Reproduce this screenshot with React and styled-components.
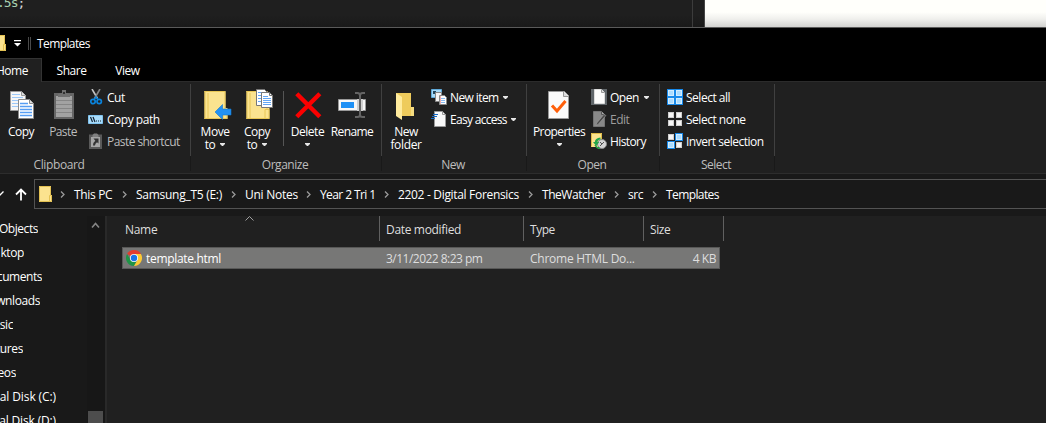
import React from "react";
import styled, { createGlobalStyle } from "styled-components";

const Global = createGlobalStyle`
  * { box-sizing: border-box; }
  body { margin: 0; background: #202020; overflow: hidden; }
`;

const Screen = styled.div`
  width: 1046px;
  height: 423px;
  overflow: hidden;
  display: flex;
  flex-direction: column;
  background: #202020;
  color: #fff;
  font-family: "Open Sans", "Noto Sans", sans-serif;
  font-size: 12px;
  line-height: 15px;
  white-space: nowrap;
`;

const T = styled.span`
  letter-spacing: ${(p) => p.$ls ?? -0.48}px;
  color: ${(p) => p.$c || "inherit"};
`;

/* Windows behind the explorer */
const Backdrop = styled.div`
  height: 27px;
  flex: none;
  display: flex;
`;
const Editor = styled.div`
  width: 693px;
  border-right: 1px solid #3c3c3c;
  background: linear-gradient(#1f1f1f 55%, #191919);
`;
const Code = styled.div`
  font: 13px/14px "DejaVu Sans Mono", monospace;
  letter-spacing: -1px;
  margin: -4px 0 0 -3px;
  color: #a8cfb0;
`;
const Punct = styled.span`
  color: #d4d4d4;
`;
const Gutter = styled.div`
  width: 12px;
  border-right: 1px solid #454545;
  background: linear-gradient(#1f1f1f 55%, #191919);
`;
const Page = styled.div`
  flex: 1;
  background: linear-gradient(#fffffb 45%, #f0f0ed 70%, #d2d2d0);
`;

const TitleBar = styled.div`
  height: 31px;
  flex: none;
  border-top: 1px solid #5a5a5a;
  background: #000;
  display: flex;
  align-items: center;
`;
const TitleFolder = styled.div`
  width: 6px;
  height: 16px;
  overflow: hidden;
  display: flex;
  justify-content: flex-end;
  svg { flex: none; }
`;
const TitleCaret = styled.svg`
  margin: 1px 0 0 8px;
`;
const Grip = styled.div`
  width: 3px;
  height: 13px;
  margin: 0 6px 0 7px;
  border: solid #4a4a4a;
  border-width: 0 1px;
`;

const Tabs = styled.div`
  height: 23px;
  flex: none;
  background: #000;
  display: flex;
`;
const Tab = styled.div`
  width: ${(p) => p.$w}px;
  padding: ${(p) => (p.$on ? "4px 13px 0 0" : "5px 0 0")};
  display: flex;
  justify-content: ${(p) => (p.$on ? "flex-end" : "center")};
  ${(p) => p.$on && "background:#202020;border:solid #333;border-width:1px 1px 0 0;height:24px;position:relative;"}
`;

const Ribbon = styled.div`
  height: 93px;
  flex: none;
  border-top: 1px solid #2b2b2b;
  border-bottom: 1px solid #2d2d2d;
  display: flex;
  background: #202020;
`;
const Group = styled.div`
  width: ${(p) => p.$w}px;
  flex: none;
  display: flex;
  flex-direction: column;
  padding-bottom: 2px;
`;
const GroupBody = styled.div`
  height: 72px;
  margin-top: 2px;
  padding-left: ${(p) => p.$pl || 0}px;
  border-right: 1px solid #404040;
  display: flex;
  flex: none;
`;
const Caption = styled.div`
  height: 15px;
  padding: 1px ${(p) => p.$pr || 0}px 0 ${(p) => p.$pl || 0}px;
  border-right: 1px solid #191919;
  text-align: center;
  color: #bdbdbd;
`;
const Big = styled.div`
  width: ${(p) => p.$w || 42}px;
  padding-top: 6px;
  display: flex;
  flex-direction: column;
  align-items: center;
  line-height: 14px;
  svg.pic { margin-bottom: 3px; overflow: visible; }
`;
const Line = styled.div`
  height: 13px;
  display: flex;
  align-items: flex-start;
  gap: 5px;
  svg.caret { margin-top: 5px; }
`;
const Divider = styled.div`
  width: 1px;
  height: 55px;
  margin: 7px 0 0 5px;
  background: #555;
`;
const Small = styled.div`
  padding: 2px 0 0 ${(p) => p.$pl || 0}px;
`;
const SmallRow = styled.div`
  height: 22px;
  display: flex;
  align-items: center;
  gap: 3px;
  svg.caret { margin-left: ${(p) => p.$gap || 0}px; }
`;

const NavBar = styled.div`
  height: 42px;
  flex: none;
  padding-top: 5px;
  display: flex;
  background: #191919;
`;
const Arrows = styled.div`
  width: 34px;
  height: 30px;
`;
const Address = styled.div`
  flex: 1;
  height: 30px;
  border: solid #535353;
  border-width: 1px 0 1px 1px;
  padding-left: 4px;
  display: flex;
  align-items: center;
`;
const Crumbs = styled.div`
  display: flex;
  margin-left: 8px;
`;
const Crumb = styled.div`
  width: ${(p) => p.$w}px;
  flex: none;
  display: flex;
  align-items: center;
  gap: 9px;
`;

const Lower = styled.div`
  flex: 1;
  display: flex;
  min-height: 0;
`;
const Tree = styled.div`
  width: 87px;
  background: #191919;
`;
const Node = styled.div`
  width: ${(p) => p.$w}px;
  height: 24px;
  overflow: hidden;
  display: flex;
  align-items: center;
  justify-content: flex-end;
`;
const Scroll = styled.div`
  width: 18px;
  padding: 6px 2px 0 1px;
  background: #171717;
  display: flex;
  flex-direction: column;
  justify-content: space-between;
  align-items: center;
`;
const Thumb = styled.div`
  width: 15px;
  height: 12px;
  background: #4d4d4d;
`;
const Files = styled.div`
  flex: 1;
  border-left: 2px solid #292929;
`;
const Header = styled.div`
  display: flex;
  height: 25px;
  padding-left: 12px;
`;
const Col = styled.div`
  width: ${(p) => p.$w}px;
  padding: 6px 0 0 6px;
  border-right: 1px solid #606060;
  color: #dedede;
  position: relative;
`;
const SortMark = styled.svg`
  position: absolute;
  top: 0;
  left: 126px;
`;
const FileRow = styled.div`
  width: 598px;
  height: 22px;
  margin: 6px 0 0 15px;
  border: 1px solid #585857;
  background: #777776;
  display: flex;
  align-items: center;
`;
const Cell = styled.div`
  width: ${(p) => p.$w}px;
  flex: none;
  display: flex;
  align-items: center;
  gap: 4px;
  padding-left: ${(p) => p.$pl || 0}px;
  justify-content: ${(p) => (p.$end ? "flex-end" : "flex-start")};
  color: ${(p) => p.$c || "#dedede"};
`;

const Caret = () => (
  <svg className="caret" width="5" height="3" viewBox="0 0 5 3"><path d="M0 0h5v1L3 3H2L0 1z" fill="#e6e6e6" /></svg>
);
const Pic = ({ w = 32, h = 32, children }) => (
  <svg className={h === 32 ? "pic" : undefined} width={w} height={h} viewBox={`0 0 ${w} ${h}`}>{children}</svg>
);

const Folder = () => (
  <svg width="13" height="16" viewBox="0 0 13 16">
    <path d="M0 0h12v9h1v7H0z" fill="#fbe38f" />
    <path d="M.5.5h11v9h1v6H.500zM10.500 15.500V9.500h1" fill="none" stroke="#e3c152" />
  </svg>
);
const CopyPic = () => (
  <Pic>
    <g transform="translate(1 0)">
      <path d="M4.500 1.500h11l4 4v15h-15z" fill="#f6f6f6" stroke="#999" />
      <path d="M15.500 1.500v4h4" fill="#ddd" stroke="#999" />
      <path d="M6 7.500h11M6 10.500h11M6 13.500h11M6 16.500h11M6 4.500h8" stroke="#9cc8f8" />
      <path d="M12.500 9.500h11l4 4v15h-15z" fill="#fff" stroke="#8a8a8a" />
      <path d="M23.500 9.500v4h4" fill="#ddd" stroke="#8a8a8a" />
      <path d="M14 13.500h8M14 16.500h12M14 19.500h12M14 22.500h12M14 25.500h12" stroke="#559df3" strokeWidth="1.300" />
    </g>
  </Pic>
);
const PastePic = () => (
  <Pic>
    <g transform="translate(1 0)">
      <path d="M6 3h20v26H6z" fill="#666" />
      <path d="M8 6h16v21H8z" fill="#a2a2a2" />
      <path d="M8 10.500h16M8 14.500h16M8 18.500h16M8 22.500h16" stroke="#858585" />
      <path d="M10 7V4l4-1V0h4v3l4 1v3z" fill="#707070" />
      <path d="M15 2h2v2h-2z" fill="#333" />
    </g>
  </Pic>
);
const BigFolderShape = () => (
  <g transform="translate(1.500 0)">
    <path d="M4 1h21v17h2v11H4z" fill="#fbe38f" />
    <path d="M4.500 1v28M7.500 3v26M4 1.500h20.500v17.500M4 28.500h22.500v-9h-4v9" fill="none" stroke="#e8c654" />
  </g>
);
const MovePic = () => (
  <Pic>
    <BigFolderShape />
    <path d="M16 22L23.500 14.500V19h8.500v6h-8.500v4.500z" fill="#2291f2" stroke="#1278d0" strokeWidth=".6" />
  </Pic>
);
const CopyToPic = () => (
  <Pic>
    <BigFolderShape />
    <path d="M15.500-.5h8l3 3v13h-11z" fill="#fff" stroke="#777" />
    <path d="M17 2.500h6M17 5.500h7M17 8.500h7M17 11.500h7" stroke="#63a6f5" />
    <path d="M20.500 2.500h8l3 3v12h-11z" fill="#fff" stroke="#777" />
    <path d="M28.500 2.500v3h3" fill="none" stroke="#777" />
    <path d="M22 6.500h5M22 8.500h8M22 10.500h8M22 12.500h8M22 14.500h8" stroke="#63a6f5" />
  </Pic>
);
const DeletePic = () => (
  <Pic><path d="M4.800 3.800l23 23M27.800 3.800l-23 23" stroke="#fb0000" strokeWidth="4.400" /></Pic>
);
const RenamePic = () => (
  <Pic>
    <path d="M2.500 9.500h27v11h-27z" fill="#f7f7f7" stroke="#999" />
    <path d="M5 12h13v6H5z" fill="#1e90f5" />
    <path d="M21 9h6v12h-6z" fill="#d0d0d0" />
    <path d="M19 3h2.500q2.500 0 2.500 2.500v19q0 2.500-2.500 2.500H19M29 3h-2.500Q24 3 24 5.500v19q0 2.500 2.500 2.500H29" fill="none" stroke="#646464" strokeWidth="2" />
  </Pic>
);
const NewFolderPic = () => (
  <Pic>
    <path d="M6 3h15v14l3 1v8H10z" fill="#eecb5c" />
    <path d="M21 17h3v9h-3z" fill="#f5dc80" />
    <path d="M6 3l6 4v23l-6-4z" fill="#ffeb9d" />
  </Pic>
);
const PropsPic = () => (
  <Pic>
    <path d="M5.500 1.500h16l4 4v23h-20z" fill="#fbfbfb" stroke="#9a9a9a" />
    <path d="M20.500 1.500v5h5" fill="#ddd" stroke="#999" />
    <path d="M9 15.500l5 5.500L22.500 11" fill="none" stroke="#ff5f0a" strokeWidth="3" />
  </Pic>
);
const CutPic = () => (
  <Pic w={16} h={16}>
    <path d="M4 0l5.500 9.500" stroke="#c4c4c4" strokeWidth="1.600" />
    <path d="M12 0L6.500 9.500" stroke="#858585" strokeWidth="1.600" />
    <circle cx="5" cy="12.500" r="2.200" fill="none" stroke="#0a83dc" strokeWidth="1.700" />
    <circle cx="11.200" cy="12.500" r="2.200" fill="none" stroke="#0a83dc" strokeWidth="1.700" />
    <path d="M6 10.500l2-2.500 2 2.500" stroke="#0a83dc" strokeWidth="1.500" fill="none" />
  </Pic>
);
const PathPic = () => (
  <Pic w={16} h={16}>
    <path d="M.5 4.500h14v8H.500z" fill="#a9dcfb" stroke="#80c3ee" />
    <path d="M2.500 6l2 5M5 6l2 5" stroke="#123" strokeWidth="1.200" />
    <path d="M8 9.500h1v1H8zM10 9.500h1v1h-1zM12 9.500h1v1h-1z" fill="#123" />
  </Pic>
);
const ShortcutPic = () => (
  <Pic w={16} h={16}>
    <path d="M1 1.500h13V16H1z" fill="#5a5a5a" />
    <path d="M3 4h9v10H3z" fill="#a6a6a6" />
    <path d="M4.500 2L6 .5h3L10.500 2v2h-6z" fill="#808080" />
    <path d="M5.500 5.500h5v5L9 9.200Q7 10.500 7 12.500H5q-.3-2.800 2.300-4.800z" fill="#333" />
  </Pic>
);
const NewItemPic = () => (
  <Pic w={16} h={16}>
    <path d="M.5.500h10v8H.500z" fill="#a5dafa" stroke="#5fa9d8" />
    <path d="M2 2h3v3H2z" fill="#23485f" />
    <path d="M4.500 3.500h6v9h-6z" fill="#f5f5f5" stroke="#888" />
    <path d="M8.500 6.500h5l2 2v7h-7z" fill="#fff" stroke="#888" />
    <path d="M10 9.500h4M10 11.500h4M10 13.500h4" stroke="#88baf2" />
    <path d="M9.500 7v8" stroke="#e06060" strokeWidth=".5" />
  </Pic>
);
const EasyPic = () => (
  <Pic w={16} h={16}>
    <path d="M3.500.500h8l3 3v12h-11z" fill="#f8f8f8" stroke="#999" />
    <path d="M11.500.500v3h3" fill="none" stroke="#999" />
    <path d="M2 3.500h5M1 5.500h5M0 7.500h4" stroke="#1769c4" strokeWidth="1.200" />
  </Pic>
);
const OpenPic = () => (
  <Pic w={16} h={16}>
    <path d="M0 0h16v16H0z" fill="#60666a" />
    <path d="M3.500.500h7l3 3v11h-10z" fill="#fcfcfc" stroke="#ddd" />
    <path d="M10.500.500v3h3" fill="#ddd" stroke="#999" />
  </Pic>
);
const EditPic = () => (
  <Pic w={16} h={16}>
    <path d="M2.500.500h8l3 3v12h-11z" fill="#888" stroke="#747474" />
    <path d="M10.500.500v3h3" fill="#aaa" stroke="#555" />
    <path d="M15 4.500l-8 9-2 1 .8-2.500 7-8.500z" fill="#4a4a4a" stroke="#aaa" strokeWidth=".5" />
  </Pic>
);
const HistoryPic = () => (
  <Pic w={16} h={16}>
    <path d="M0 0h11v14H0z" fill="#fbe38f" />
    <path d="M.5 13.500V.5H10.500V8" fill="none" stroke="#dfbb46" />
    <circle cx="11" cy="11" r="4.500" fill="#d5d5d5" stroke="#888" />
    <path d="M9 9l2 2 2-2M11 11l-2 2" fill="none" stroke="#555" />
    <path d="M9.500 4.500Q4 5 3.800 9H2l3.200 4L8.300 9H6.500Q6.500 7 9.500 6.500z" fill="#25a64a" />
    <path d="M4 12q2 3.500 5 3.500" fill="none" stroke="#25a64a" strokeWidth="1.500" />
  </Pic>
);
const TILES = [[0, 0], [8, 0], [0, 8], [8, 8]];
const SelectPic = ({ on }) => (
  <Pic w={16} h={16}>
    {TILES.map(([x, y], i) => (
      <g key={i}>
        {on[i] ? <rect x={x} y={y} width="8" height="8" fill="#1789ea" /> : null}
        <rect x={x + 1.500} y={y + 1.500} width="5" height="5" fill={on[i] ? "#abdcff" : "#f6f6f6"} stroke={on[i] ? "#d2edff" : "#cfcfcf"} />
      </g>
    ))}
  </Pic>
);
const ChromePic = () => (
  <svg width="16" height="16" viewBox="0 0 16 16">
    <path d="M8 8L1.070 4A8 8 0 0 1 14.930 4z" fill="#e33b2e" />
    <path d="M1.070 4L4.540 10 8 8l3.460 2L8 16A8 8 0 0 1 1.070 4z" fill="#1e9446" />
    <path d="M8 4h6.930A8 8 0 0 1 8 16l3.460-6z" fill="#fcc934" />
    <circle cx="8" cy="8" r="4" fill="#fff" />
    <circle cx="8" cy="8" r="3.200" fill="#1a73e8" />
  </svg>
);
const Chevron = () => (
  <svg width="5" height="7" viewBox="0 0 5 7"><path d="M1 .5l3 3-3 3" fill="none" stroke="#9a9a9a" strokeWidth="1.300" /></svg>
);

const CRUMBS = [
  ["This PC", 62, -0.33], ["Samsung_T5 (E:)", 109, -0.27], ["Uni Notes", 75, -0.25], ["Year 2 Tri 1", 78, -0.6],
  ["2202 - Digital Forensics", 144, -0.32], ["TheWatcher", 86, -0.45], ["src", 38, -0.4], ["Templates", 80, -0.6],
];
const NODES = [
  ["Objects", 38, -0.45], ["ktop", 24, -0.4], ["cuments", 42, -0.45], ["wnloads", 40, -0.4], ["sic", 13, -0.4],
  ["ctures", 23, -0.4], ["eos", 16, -0.4], ["al Disk (C:)", 56, -0.1], ["al Disk (D:)", 56, -0.15],
];

export default function App() {
  return (
    <Screen>
      <Global />
      <Backdrop>
        <Editor><Code>.5s<Punct>;</Punct></Code></Editor>
        <Gutter />
        <Page />
      </Backdrop>
      <TitleBar>
        <TitleFolder><Folder /></TitleFolder>
        <TitleCaret width="7" height="7" viewBox="0 0 7 7"><path d="M0 0h7v1.200H0zM0 3h7L3.500 6.500z" fill="#fff" /></TitleCaret>
        <Grip />
        <T $ls={-0.6}>Templates</T>
      </TitleBar>
      <Tabs>
        <Tab $on $w={42}><T>Home</T></Tab>
        <Tab $w={59}><T>Share</T></Tab>
        <Tab $w={53}><T>View</T></Tab>
      </Tabs>
      <Ribbon>
        <Group $w={191}>
          <GroupBody>
            <Big><CopyPic /><Line><T>Copy</T></Line></Big>
            <Big><PastePic /><Line><T $c="#bdbdbd" $ls={-0.6}>Paste</T></Line></Big>
            <Small $pl={4}>
              <SmallRow><CutPic /><T>Cut</T></SmallRow>
              <SmallRow><PathPic /><T>Copy path</T></SmallRow>
              <SmallRow><ShortcutPic /><T $c="#bdbdbd" $ls={-0.56}>Paste shortcut</T></SmallRow>
            </Small>
          </GroupBody>
          <Caption $pr={72}><T $ls={-0.4}>Clipboard</T></Caption>
        </Group>
        <Group $w={191}>
          <GroupBody $pl={3}>
            <Big><MovePic /><Line><T>Move</T></Line><Line><T>to</T><Caret /></Line></Big>
            <Big><CopyToPic /><Line><T>Copy</T></Line><Line><T>to</T><Caret /></Line></Big>
            <Divider />
            <Big $w={47}><DeletePic /><Line><T>Delete</T></Line><Line><Caret /></Line></Big>
            <Big><RenamePic /><Line><T $ls={-0.6}>Rename</T></Line></Big>
          </GroupBody>
          <Caption $pr={2}><T>Organize</T></Caption>
        </Group>
        <Group $w={145}>
          <GroupBody $pl={3}>
            <Big><NewFolderPic /><Line><T $ls={-0.6}>New</T></Line><Line><T $ls={-0.35}>folder</T></Line></Big>
            <Small $pl={4}>
              <SmallRow $gap={1}><NewItemPic /><T $ls={-0.6}>New item</T><Caret /></SmallRow>
              <SmallRow $gap={1}><EasyPic /><T $ls={-0.7}>Easy access</T><Caret /></SmallRow>
            </Small>
          </GroupBody>
          <Caption $pr={2}><T>New</T></Caption>
        </Group>
        <Group $w={133}>
          <GroupBody $pl={3}>
            <Big $w={58}><PropsPic /><Line><T $ls={-0.6}>Properties</T></Line><Line><Caret /></Line></Big>
            <Small $pl={3}>
              <SmallRow $gap={2}><OpenPic /><T>Open</T><Caret /></SmallRow>
              <SmallRow><EditPic /><T $c="#9d9d9d">Edit</T></SmallRow>
              <SmallRow><HistoryPic /><T $ls={-0.6}>History</T></SmallRow>
            </Small>
          </GroupBody>
          <Caption $pr={2}><T>Open</T></Caption>
        </Group>
        <Group $w={115}>
          <GroupBody $pl={7}>
            <Small>
              <SmallRow><SelectPic on={[1, 1, 1, 1]} /><T>Select all</T></SmallRow>
              <SmallRow><SelectPic on={[0, 0, 0, 0]} /><T>Select none</T></SmallRow>
              <SmallRow><SelectPic on={[0, 1, 1, 0]} /><T $ls={-0.5}>Invert selection</T></SmallRow>
            </Small>
          </GroupBody>
          <Caption $pr={2}><T>Select</T></Caption>
        </Group>
      </Ribbon>
      <NavBar>
        <Arrows>
          <svg width="34" height="30" viewBox="0 0 34 30" fill="none" stroke="#fff">
            <path d="M-3 13l3 3 3.500-3.500" strokeWidth="1.300" />
            <path d="M21 21.500V11M16 15.500l5-5 5 5" strokeWidth="1.800" />
          </svg>
        </Arrows>
        <Address>
          <Folder />
          <Crumbs>
            {CRUMBS.map(([name, w, ls]) => (
              <Crumb key={name} $w={w}><Chevron /><T $ls={ls}>{name}</T></Crumb>
            ))}
          </Crumbs>
        </Address>
      </NavBar>
      <Lower>
        <Tree>
          {NODES.map(([name, w, ls]) => <Node key={name} $w={w}><T $ls={ls}>{name}</T></Node>)}
        </Tree>
        <Scroll>
          <svg width="9" height="7" viewBox="0 0 9 7"><path d="M1 5.500l3.500-4 3.500 4" fill="none" stroke="#858585" strokeWidth="1.600" /></svg>
          <Thumb />
        </Scroll>
        <Files>
          <Header>
            <Col $w={261}>
              <T $ls={-0.3}>Name</T>
              <SortMark width="9" height="5" viewBox="0 0 9 5"><path d="M.5 4.500l4-4 4 4" fill="none" stroke="#a0a0a0" /></SortMark>
            </Col>
            <Col $w={144}><T $ls={-0.33}>Date modified</T></Col>
            <Col $w={120}><T>Type</T></Col>
            <Col $w={80}><T $ls={-0.4}>Size</T></Col>
          </Header>
          <FileRow>
            <Cell $w={263} $pl={3} $c="#fff"><ChromePic /><T $ls={-0.32}>template.html</T></Cell>
            <Cell $w={144}><T $ls={-0.52}>3/11/2022 8:23 pm</T></Cell>
            <Cell $w={120}><T $ls={-0.25}>Chrome HTML Do...</T></Cell>
            <Cell $w={66} $end><T>4 KB</T></Cell>
          </FileRow>
        </Files>
      </Lower>
    </Screen>
  );
}
